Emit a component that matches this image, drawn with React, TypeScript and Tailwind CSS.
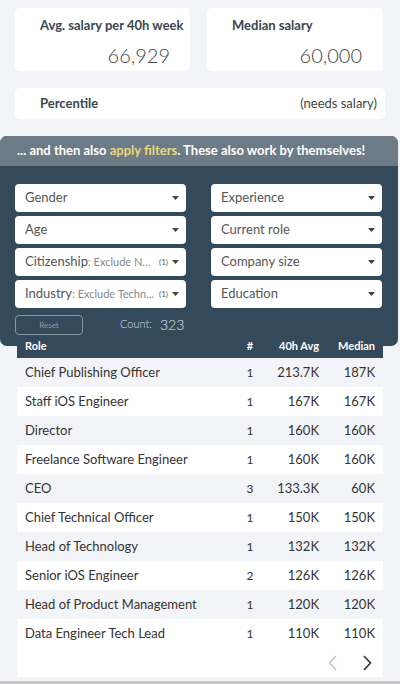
import React from 'react';

interface Filter {
  label: string;
  value?: string;
  n?: number;
}

const filters: { left: Filter; right: Filter }[] = [
  { left: { label: 'Gender' }, right: { label: 'Experience' } },
  { left: { label: 'Age' }, right: { label: 'Current role' } },
  {
    left: { label: 'Citizenship', value: 'Exclude No...', n: 1 },
    right: { label: 'Company size' },
  },
  {
    left: { label: 'Industry', value: 'Exclude Techn...', n: 1 },
    right: { label: 'Education' },
  },
];

const rows = [
  ['Chief Publishing Officer', '1', '213.7K', '187K'],
  ['Staff iOS Engineer', '1', '167K', '167K'],
  ['Director', '1', '160K', '160K'],
  ['Freelance Software Engineer', '1', '160K', '160K'],
  ['CEO', '3', '133.3K', '60K'],
  ['Chief Technical Officer', '1', '150K', '150K'],
  ['Head of Technology', '1', '132K', '132K'],
  ['Senior iOS Engineer', '2', '126K', '126K'],
  ['Head of Product Management', '1', '120K', '120K'],
  ['Data Engineer Tech Lead', '1', '110K', '110K'],
];

function Caret() {
  return (
    <svg width="7" height="4" viewBox="0 0 7 4" className="shrink-0">
      <path d="M0 0h7L3.5 4z" fill="#444" />
    </svg>
  );
}

function Dropdown({ f }: { f: Filter }) {
  return (
    <div className="h-[28px] rounded-[4px] bg-white flex items-center pl-[10px] pr-[7px] gap-[4px]">
      <div className="flex-1 min-w-0 flex items-baseline whitespace-nowrap overflow-hidden">
        <span className="text-[13px] text-[#555]">{f.label}</span>
        {f.value && (
          <span className="text-[11px] text-[#888] truncate">: {f.value}</span>
        )}
      </div>
      {f.n && <span className="text-[8px] text-[#555]">({f.n})</span>}
      <Caret />
    </div>
  );
}

export default function App() {
  return (
    <div
      className="w-[400px] h-[684px] overflow-hidden bg-[#f2f4f8] flex flex-col"
      style={{ fontFamily: 'Lato, "Open Sans", sans-serif' }}
    >
      <div className="px-[15px] pt-[8px]">
        <div className="grid grid-cols-[175px_176px] gap-[17px]">
          <div className="h-[63px] rounded-[5px] bg-white pt-[8px] pl-[25px] pr-[20px]">
            <div className="text-[13px] font-bold text-[#3b4651] whitespace-nowrap">Avg. salary per 40h week</div>
            <div className="text-right text-[20px] font-light text-[#444] mt-[6px] leading-[26px]">66,929</div>
          </div>
          <div className="h-[63px] rounded-[5px] bg-white pt-[8px] pl-[25px] pr-[21px]">
            <div className="text-[13px] font-bold text-[#3b4651] whitespace-nowrap">Median salary</div>
            <div className="text-right text-[20px] font-light text-[#444] mt-[6px] leading-[26px]">60,000</div>
          </div>
        </div>
        <div className="mt-[17px] h-[31px] rounded-[5px] bg-white flex items-center justify-between pl-[25px] pr-[8px]">
          <span className="text-[13px] font-bold text-[#3b4651]">Percentile</span>
          <span className="text-[13px] text-[#444]">(needs salary)</span>
        </div>
      </div>

      <div className="mt-[17px] w-[398px] h-[210px] rounded-[7px] overflow-hidden bg-[#34495a] shrink-0">
        <div className="h-[30px] bg-[#6c7b85] flex items-center pl-[17px] text-[13px] font-bold text-white whitespace-nowrap">
          ... and then also&nbsp;<span className="text-[#e9d77c]">apply filters</span>. These also work by themselves!
        </div>
        <div className="px-[15px] pt-[18px]">
          <div className="grid grid-cols-[171px_171px] gap-x-[25px] gap-y-[4px]">
            {filters.map((r, i) => (
              <React.Fragment key={i}>
                <Dropdown f={r.left} />
                <Dropdown f={r.right} />
              </React.Fragment>
            ))}
          </div>
          <div className="mt-[6px] flex items-center">
            <div className="w-[68px] h-[20px] rounded-[4px] border border-[#8797a2] flex items-center justify-center text-[8px] text-[#8e9ca6]">
              Reset
            </div>
            <span className="ml-[37px] text-[11px] font-light text-[#d5dce1]">Count:</span>
            <span className="ml-[8px] text-[14px] font-light text-[#e6eaed]">323</span>
          </div>
        </div>
      </div>

      <div className="-mt-[11px] ml-[17px] w-[366px] bg-white">
        <div className="h-[23px] bg-[#34495a] grid grid-cols-[205px_40px_49px_56px] px-[8px] items-center text-[11px] font-bold text-white">
          <span>Role</span>
          <span className="text-center">#</span>
          <span className="text-right">40h Avg</span>
          <span className="text-right">Median</span>
        </div>
        {rows.map((r, i) => (
          <div
            key={r[0]}
            className={`h-[29px] grid grid-cols-[205px_40px_49px_56px] px-[8px] items-center text-[13px] text-[#333] ${
              i % 2 === 0 ? 'bg-[#f3f4f7]' : 'bg-white'
            }`}
          >
            <span className="truncate">{r[0]}</span>
            <span className="text-center text-[12px]">{r[1]}</span>
            <span className="text-right">{r[2]}</span>
            <span className="text-right">{r[3]}</span>
          </div>
        ))}
        <div className="h-[29px] flex items-center justify-end pr-[11px] gap-[26px]">
          <svg width="9" height="16" viewBox="0 0 9 16">
            <path d="M8 1L1.5 8L8 15" fill="none" stroke="#bbb" strokeWidth="1.2" />
          </svg>
          <svg width="9" height="16" viewBox="0 0 9 16">
            <path d="M1 1L7.5 8L1 15" fill="none" stroke="#333" strokeWidth="1.6" />
          </svg>
        </div>
      </div>

      <div className="mt-auto h-[3px] bg-[#c8c8c8] shrink-0" />
    </div>
  );
}
